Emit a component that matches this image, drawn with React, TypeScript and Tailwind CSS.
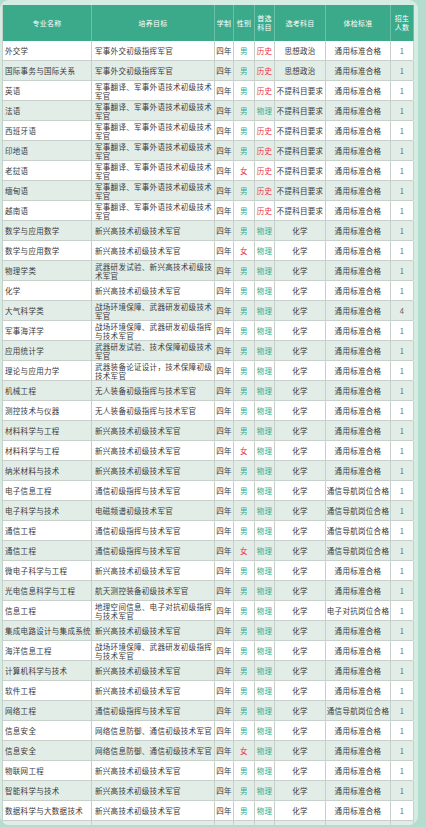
import React from "react";

type Row = [string, string, string, string, string, string, string];

const T1 = "军事翻译、军事外语技术初级技术军官";
const XX = "新兴高技术初级技术军官";
const TY = "通用标准合格";
const TX = "通信导航岗位合格";

const rows: Row[] = [
  ["外交学", "军事外交初级指挥军官", "男", "历史", "思想政治", TY, "1"],
  ["国际事务与国际关系", "军事外交初级指挥军官", "男", "历史", "思想政治", TY, "1"],
  ["英语", T1, "男", "历史", "不提科目要求", TY, "1"],
  ["法语", T1, "男", "物理", "不提科目要求", TY, "1"],
  ["西班牙语", T1, "男", "历史", "不提科目要求", TY, "1"],
  ["印地语", T1, "男", "历史", "不提科目要求", TY, "1"],
  ["老挝语", T1, "女", "历史", "不提科目要求", TY, "1"],
  ["缅甸语", T1, "男", "历史", "不提科目要求", TY, "1"],
  ["越南语", T1, "男", "历史", "不提科目要求", TY, "1"],
  ["数学与应用数学", XX, "男", "物理", "化学", TY, "1"],
  ["数学与应用数学", XX, "女", "物理", "化学", TY, "1"],
  ["物理学类", "武器研发试验、新兴高技术初级技术军官", "男", "物理", "化学", TY, "1"],
  ["化学", XX, "男", "物理", "化学", TY, "1"],
  ["大气科学类", "战场环境保障、武器研发初级技术军官", "男", "物理", "化学", TY, "4"],
  ["军事海洋学", "战场环境保障、武器研发初级指挥与技术军官", "男", "物理", "化学", TY, "1"],
  ["应用统计学", "武器研发试验、技术保障初级技术军官", "男", "物理", "化学", TY, "1"],
  ["理论与应用力学", "武器装备论证设计，技术保障初级技术军官", "男", "物理", "化学", TY, "1"],
  ["机械工程", "无人装备初级指挥与技术军官", "男", "物理", "化学", TY, "1"],
  ["测控技术与仪器", "无人装备初级指挥与技术军官", "男", "物理", "化学", TY, "1"],
  ["材料科学与工程", XX, "男", "物理", "化学", TY, "1"],
  ["材料科学与工程", XX, "女", "物理", "化学", TY, "1"],
  ["纳米材料与技术", XX, "男", "物理", "化学", TY, "1"],
  ["电子信息工程", "通信初级指挥与技术军官", "男", "物理", "化学", TX, "1"],
  ["电子科学与技术", "电磁频谱初级技术军官", "男", "物理", "化学", TX, "1"],
  ["通信工程", "通信初级指挥与技术军官", "男", "物理", "化学", TX, "1"],
  ["通信工程", "通信初级指挥与技术军官", "女", "物理", "化学", TX, "1"],
  ["微电子科学与工程", XX, "男", "物理", "化学", TY, "1"],
  ["光电信息科学与工程", "航天测控装备初级技术军官", "男", "物理", "化学", TY, "1"],
  ["信息工程", "地理空间信息、电子对抗初级指挥与技术军官", "男", "物理", "化学", "电子对抗岗位合格", "1"],
  ["集成电路设计与集成系统", XX, "男", "物理", "化学", TY, "1"],
  ["海洋信息工程", "战场环境保障、武器研发初级指挥与技术军官", "男", "物理", "化学", TY, "1"],
  ["计算机科学与技术", XX, "男", "物理", "化学", TY, "1"],
  ["软件工程", XX, "男", "物理", "化学", TY, "1"],
  ["网络工程", "通信初级指挥与技术军官", "男", "物理", "化学", TX, "1"],
  ["信息安全", "网络信息防御、通信初级技术军官", "男", "物理", "化学", TY, "1"],
  ["信息安全", "网络信息防御、通信初级技术军官", "女", "物理", "化学", TY, "1"],
  ["物联网工程", XX, "男", "物理", "化学", TY, "1"],
  ["智能科学与技术", XX, "男", "物理", "化学", TY, "1"],
  ["数据科学与大数据技术", XX, "男", "物理", "化学", TY, "1"],
  ["", "", "", "", "", "", ""],
];

const cell = "h-full flex items-center border-r border-[#c8d0cc] shrink-0";
const hcell = "h-full flex items-center justify-center text-center border-r border-[#6cc2a8] shrink-0";

export default function App() {
  return (
    <div className="w-[426px] h-[827px] bg-[#b4ddcf] overflow-hidden" style={{ fontFamily: '"Noto Sans CJK SC", "Noto Sans", sans-serif' }}>
      <div className="w-[418px] h-[825px] bg-[#d5ece3] rounded-[9px] overflow-hidden pt-[5px] pl-[2px]">
        <div className="w-[411px] border-l border-[#c8d0cc]">
          <div className="flex h-[36px] bg-[#3aaa8b] text-white text-[7px] leading-[9px] tracking-[0.3px]">
            <div className={`${hcell} w-[89px]`}>专业名称</div>
            <div className={`${hcell} w-[123px]`}>培养目标</div>
            <div className={`${hcell} w-[19px]`}>学制</div>
            <div className={`${hcell} w-[21px]`}>性别</div>
            <div className={`${hcell} w-[20px]`}>首选<br />科目</div>
            <div className={`${hcell} w-[51px]`}>选考科目</div>
            <div className={`${hcell} w-[65px]`}>体检标准</div>
            <div className={`${hcell} w-[23px]`}>招生<br />人数</div>
          </div>
          {rows.map((r, i) => (
            <div
              key={i}
              className={`flex h-[20px] border-b border-[#c8d0cc] text-[7.5px] leading-[9px] tracking-[0.3px] text-[#3a3a3a] ${i % 2 === 0 ? "bg-white" : "bg-[#e3ede7]"}`}
            >
              <div className={`${cell} w-[89px] pl-[2px]`}>{r[0]}</div>
              <div className={`${cell} w-[123px] pl-[3px] pr-[2px]`}>{r[1]}</div>
              <div className={`${cell} w-[19px] justify-center`}>{r[0] ? "四年" : ""}</div>
              <div className={`${cell} w-[21px] justify-center ${r[2] === "女" ? "text-[#e8333c]" : "text-[#3aaa8b]"}`}>{r[2]}</div>
              <div className={`${cell} w-[20px] justify-center ${r[3] === "历史" ? "text-[#e8333c]" : "text-[#3aaa8b]"}`}>{r[3]}</div>
              <div className={`${cell} w-[51px] justify-center`}>{r[4]}</div>
              <div className={`${cell} w-[65px] justify-center`}>{r[5]}</div>
              <div className={`${cell} w-[23px] justify-center text-[#666]`}>{r[6]}</div>
            </div>
          ))}
        </div>
      </div>
    </div>
  );
}
